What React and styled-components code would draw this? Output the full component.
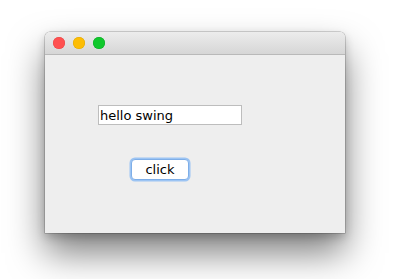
import React from "react";
import styled, { createGlobalStyle } from "styled-components";

const Global = createGlobalStyle`
  html, body { margin: 0; padding: 0; background: #ffffff; }
  body { width: 400px; height: 279px; overflow: hidden; font-family: "DejaVu Sans", "Liberation Sans", sans-serif; }
`;

const Stage = styled.div`
  padding: 32px 0 0 45px;
`;

const Window = styled.div`
  width: 300px;
  height: 201px;
  display: flex;
  flex-direction: column;
  border-radius: 5px 5px 0 0;
  background: #eeeeee;
  box-shadow: 0 0 0 0.5px rgba(0,0,0,0.3), 0 20px 36px rgba(0,0,0,0.5), 0 4px 10px rgba(0,0,0,0.2);
  overflow: hidden;
`;

const TitleBar = styled.div`
  height: 22px;
  flex: none;
  display: flex;
  align-items: center;
  gap: 8px;
  padding-left: 8px;
  background: linear-gradient(#ececec, #d6d6d6);
  border-bottom: 1px solid #b9b9b9;
`;

const Light = styled.span`
  width: 12px;
  height: 12px;
  border-radius: 50%;
  background: ${(p) => p.$color};
  box-shadow: inset 0 0 0 0.5px ${(p) => p.$edge};
`;

const Content = styled.div`
  flex: 1;
  display: flex;
  flex-direction: column;
  padding: 50px 0 0 53px;
`;

const Field = styled.input`
  box-sizing: border-box;
  width: 144px;
  height: 20px;
  border: 1px solid #bdbdbd;
  background: #fff;
  padding: 0 1px;
  font-family: inherit;
  font-size: 13px;
  color: #000;
  outline: none;
`;

const Button = styled.button`
  box-sizing: border-box;
  align-self: flex-start;
  margin: 34px 0 0 33px;
  width: 58px;
  height: 21px;
  border-radius: 4px;
  border: 1px solid #7eaee8;
  box-shadow: 0 0 0 1.5px #9cc4f3;
  background: #fff;
  font-family: inherit;
  font-size: 13px;
  color: #000;
  padding: 0;
  line-height: 17px;
`;

export default function App() {
  return (
    <>
      <Global />
      <Stage>
        <Window>
          <TitleBar>
            <Light $color="#ff5050" $edge="#e84545" />
            <Light $color="#fdbd05" $edge="#e0a800" />
            <Light $color="#10c82c" $edge="#0aa824" />
          </TitleBar>
          <Content>
            <Field defaultValue="hello swing" readOnly />
            <Button>click</Button>
          </Content>
        </Window>
      </Stage>
    </>
  );
}
